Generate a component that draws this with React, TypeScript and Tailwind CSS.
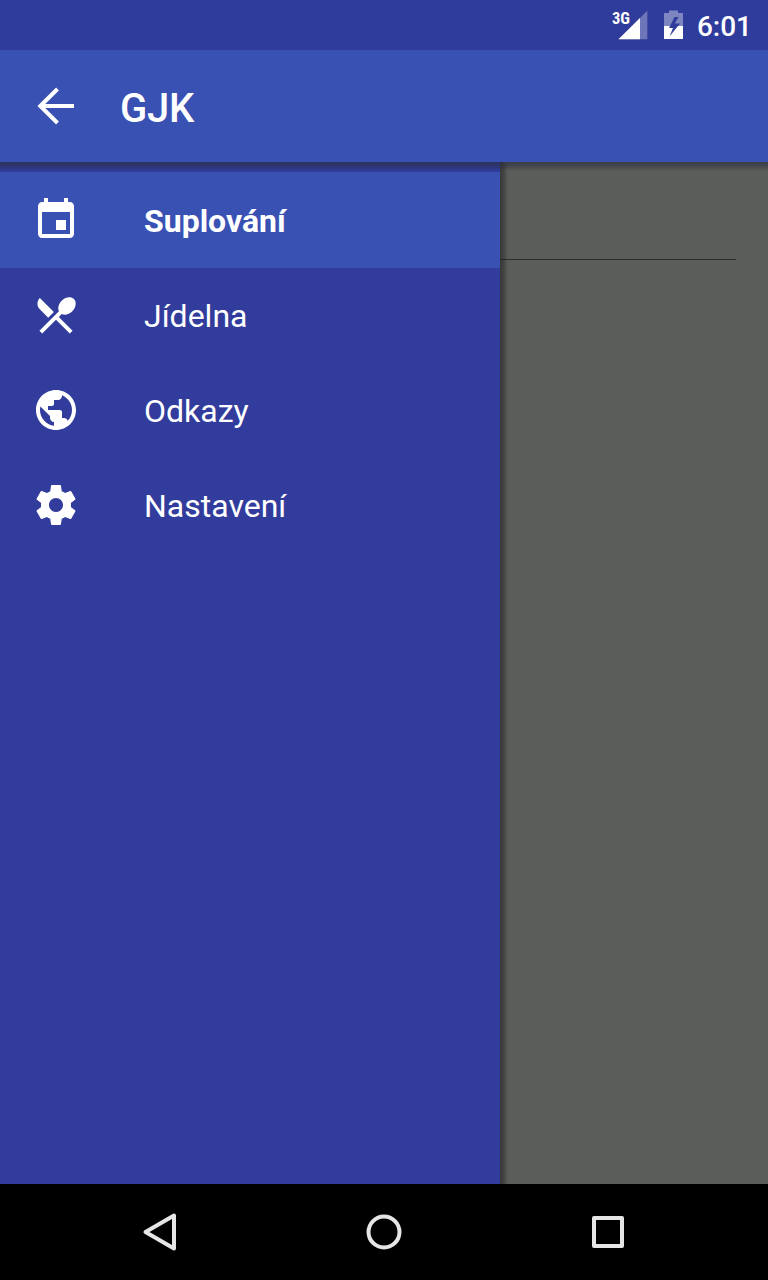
import React from "react";

const items = [
  {
    label: "Suplování",
    d: "M17 12h-5v5h5v-5zM16 1v2H8V1H6v2H5c-1.11 0-1.99.9-1.99 2L3 19c0 1.1.89 2 2 2h14c1.1 0 2-.9 2-2V5c0-1.1-.9-2-2-2h-1V1h-2zm3 18H5V8h14v11z",
  },
  {
    label: "Jídelna",
    d: "M8.1 13.34l2.83-2.83L3.91 3.5c-1.56 1.56-1.56 4.09 0 5.66l4.19 4.18zm6.78-1.81c1.53.71 3.68.21 5.27-1.38 1.91-1.91 2.28-4.65.81-6.12-1.46-1.46-4.2-1.1-6.12.81-1.59 1.59-2.09 3.74-1.38 5.27L3.7 19.87l1.41 1.41L12 14.41l6.88 6.88 1.41-1.41L13.41 13l1.47-1.47z",
  },
  {
    label: "Odkazy",
    d: "M12 2C6.48 2 2 6.48 2 12s4.48 10 10 10 10-4.48 10-10S17.52 2 12 2zm-1 17.93c-3.95-.49-7-3.85-7-7.93 0-.62.08-1.21.21-1.79L9 15v1c0 1.1.9 2 2 2v1.93zm6.9-2.54c-.26-.81-1-1.39-1.9-1.39h-1v-3c0-.55-.45-1-1-1H8v-2h2c.55 0 1-.45 1-1V7h2c1.1 0 2-.9 2-2v-.41c2.93 1.19 5 4.06 5 7.41 0 2.08-.8 3.97-2.1 5.39z",
  },
  {
    label: "Nastavení",
    d: "M19.43 12.98c.04-.32.07-.64.07-.98s-.03-.66-.07-.98l2.11-1.65c.19-.15.24-.42.12-.64l-2-3.46c-.12-.22-.39-.3-.61-.22l-2.49 1c-.52-.4-1.08-.73-1.69-.98l-.38-2.65C14.46 2.18 14.25 2 14 2h-4c-.25 0-.46.18-.49.42l-.38 2.65c-.61.25-1.17.59-1.69.98l-2.49-1c-.23-.09-.49 0-.61.22l-2 3.46c-.13.22-.07.49.12.64l2.11 1.65c-.04.32-.07.65-.07.98s.03.66.07.98l-2.11 1.65c-.19.15-.24.42-.12.64l2 3.46c.12.22.39.3.61.22l2.49-1c.52.4 1.08.73 1.69.98l.38 2.65c.03.24.24.42.49.42h4c.25 0 .46-.18.49-.42l.38-2.65c.61-.25 1.17-.59 1.69-.98l2.49 1c.23.09.49 0 .61-.22l2-3.46c.12-.22.07-.49-.12-.64l-2.11-1.65zM12 15.5c-1.93 0-3.5-1.57-3.5-3.5s1.57-3.5 3.5-3.5 3.5 1.57 3.5 3.5-1.57 3.5-3.5 3.5z",
  },
];

function StatusBar() {
  return (
    <div className="flex h-[50px] shrink-0 items-center justify-end bg-[#303c9b] pr-4 text-white">
      <div className="flex h-full items-start pt-[10px]">
        <span className="-mr-[14px] w-5 text-[17px] leading-[17px] font-bold font-['Roboto_Condensed',Roboto,sans-serif]">
          <span className="inline-block origin-left scale-x-[0.97]">3G</span>
        </span>
        <svg width="30" height="30" viewBox="0 0 30 30">
          <path d="M0.500 29.300L29.300 0.800v28.500z" fill="#fff" fillOpacity=".3" />
          <path d="M0.500 29.300L22 8v21.300z" fill="#fff" />
        </svg>
      </div>
      <svg className="mr-[13px] ml-[15px]" width="21" height="30" viewBox="0 0 21 30">
        <path d="M1 3h5V0.500h9V3h5v13H1z" fill="#7d86c1" />
        <path d="M1 16h19v13H1z" fill="#fff" />
        <path d="M11.500 7L6 18h4L6.500 26.500L17 13.500h-5.200L15.500 7z" fill="#303c9b" />
      </svg>
      <span className="pt-[3px] text-[28px] leading-[32px] font-medium">6:01</span>
    </div>
  );
}

function AppBar() {
  return (
    <header className="relative z-10 flex h-28 shrink-0 items-center bg-[#3a51b4] text-white">
      <svg className="ml-8" width="48" height="48" viewBox="0 0 48 48" fill="none" stroke="#fff" strokeWidth="4">
        <path d="M42 24H8M25.500 7L8.300 24l17.200 17" />
      </svg>
      <h1 className="ml-10 pt-[6px] text-[40px] leading-[48px] font-medium tracking-[-0.2px]">GJK</h1>
      <div className="absolute top-full left-0 h-[9px] w-full bg-[linear-gradient(to_bottom,rgba(40,45,60,0.65),rgba(40,45,60,0.5)_40%,rgba(40,45,60,0))]" />
    </header>
  );
}

function Drawer() {
  return (
    <nav className="relative w-[500px] bg-[#313c9c] pt-[10px]">
      {items.map((item, i) => (
        <div
          key={item.label}
          className={
            i === 0
              ? "flex h-24 items-center bg-[#3a51b4] pl-8 font-bold text-white"
              : "-mt-px flex h-24 items-center pl-8 text-white"
          }
        >
          <svg width="48" height="48" viewBox="0 0 24 24" fill="currentColor">
            <path d={item.d} />
          </svg>
          <span className="ml-16 pt-[2px] text-[32px] leading-[40px]">{item.label}</span>
        </div>
      ))}
      <div className="absolute top-0 left-full h-full w-2 bg-[linear-gradient(to_right,rgba(35,35,35,0.65),rgba(35,35,35,0.4)_50%,rgba(35,35,35,0))]" />
    </nav>
  );
}

function NavigationBar() {
  return (
    <footer className="relative z-10 flex h-24 shrink-0 items-center justify-between bg-black px-[136px]">
      <svg width="48" height="48" viewBox="0 0 48 48" fill="none" stroke="#e6e6e6" strokeWidth="4" strokeLinejoin="round">
        <path d="M38 7.500v33L9.500 24z" />
      </svg>
      <svg width="48" height="48" viewBox="0 0 48 48" fill="none" stroke="#e6e6e6" strokeWidth="4">
        <circle cx="24" cy="24" r="15.500" />
      </svg>
      <svg width="48" height="48" viewBox="0 0 48 48" fill="none" stroke="#e6e6e6" strokeWidth="4" strokeLinejoin="round">
        <rect x="10" y="10" width="28" height="28" />
      </svg>
    </footer>
  );
}

export default function App() {
  return (
    <div className="flex h-[1280px] w-[768px] flex-col overflow-hidden font-[Roboto,sans-serif]">
      <StatusBar />
      <AppBar />
      <main className="flex grow overflow-hidden bg-[#5b5d5a]">
        <Drawer />
        <div className="mt-[97px] mr-8 h-px grow bg-[#2b2b2a]" />
      </main>
      <NavigationBar />
    </div>
  );
}
